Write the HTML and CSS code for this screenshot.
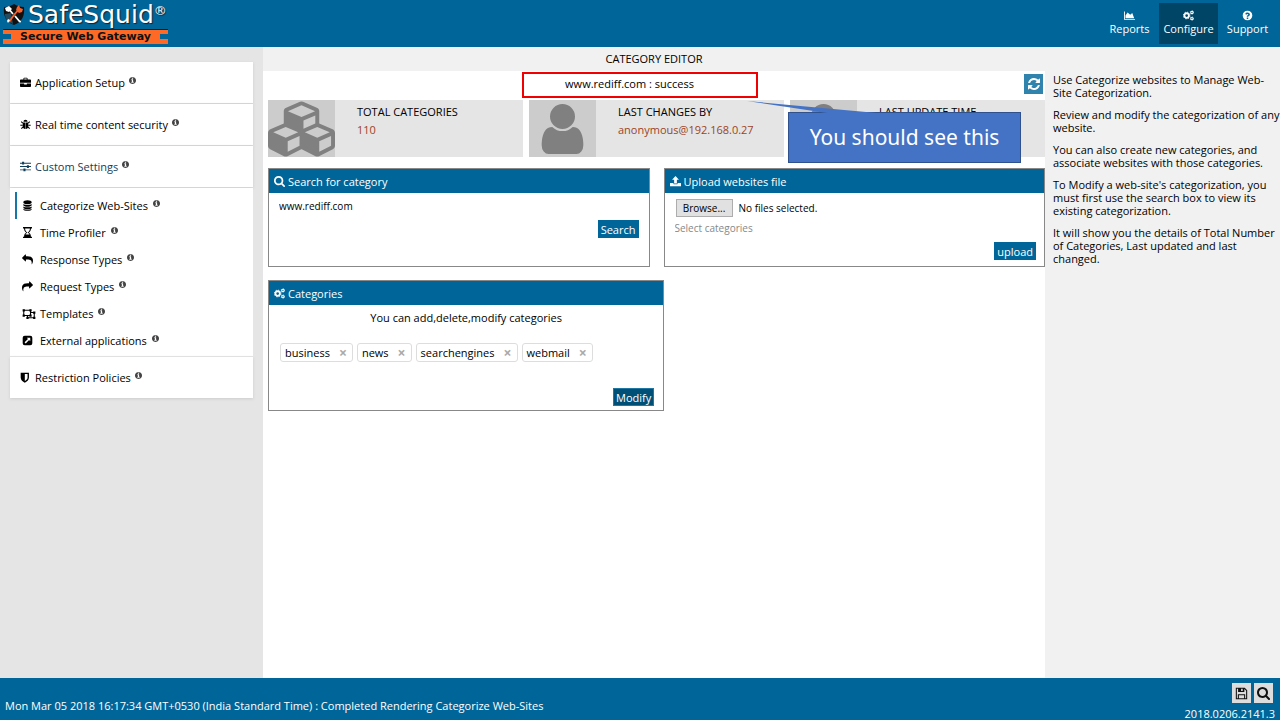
FILE: index.html
```html
<!DOCTYPE html>
<html lang="en">
<head>
<meta charset="utf-8">
<meta name="viewport" content="width=device-width, initial-scale=1">
<title>SafeSquid - Category Editor</title>
<link rel="stylesheet" href="styles.css">
</head>
<body>
<svg class="sprite" aria-hidden="true">
  <symbol id="info" viewBox="128 128 1536 1536"><path d="M1152 1376v-160q0-14-9-23t-23-9h-96v-512q0-14-9-23t-23-9h-320q-14 0-23 9t-9 23v160q0 14 9 23t23 9h96v320h-96q-14 0-23 9t-9 23v160q0 14 9 23t23 9h448q14 0 23-9t9-23zm-128-896v-160q0-14-9-23t-23-9h-192q-14 0-23 9t-9 23v160q0 14 9 23t23 9h192q14 0 23-9t9-23zm640 416q0 209-103 385.500t-279.500 279.500-385.500 103-385.500-103-279.500-279.500-103-385.500 103-385.500 279.500-279.500 385.500-103 385.500 103 279.500 279.500 103 385.500z"/></symbol>
  <symbol id="search" viewBox="64 128 1664 1664"><path d="M1216 832q0-185-131.500-316.500t-316.500-131.500-316.500 131.500-131.500 316.500 131.500 316.500 316.500 131.500 316.500-131.500 131.500-316.500zm512 832q0 52-38 90t-90 38q-54 0-90-38l-343-342q-179 124-399 124-143 0-273.500-55.500t-225-150-150-225-55.500-273.500 55.500-273.500 150-225 225-150 273.500-55.500 273.500 55.500 225 150 150 225 55.500 273.500q0 220-124 399l343 343q37 37 37 90z"/></symbol>
  <symbol id="refresh" viewBox="0 0 1792 1792"><path d="M1639 1056q0 5-1 7-64 268-268 434.500t-478 166.500q-146 0-282.500-55t-243.500-157l-129 129q-19 19-45 19t-45-19-19-45v-448q0-26 19-45t45-19h448q26 0 45 19t19 45-19 45l-137 137q71 66 161 102t187 36q134 0 250-65t186-179q11-17 53-117 8-23 30-23h192q13 0 22.500 9.500t9.500 22.500zm25-800v448q0 26-19 45t-45 19h-448q-26 0-45-19t-19-45 19-45l138-138q-148-137-349-137-134 0-250 65t-186 179q-11 17-53 117-8 23-30 23h-199q-13 0-22.500-9.500t-9.500-22.500v-7q65-268 270-434.500t480-166.500q146 0 284 55.500t245 156.500l130-129q19-19 45-19t45 19 19 45z"/></symbol>
  <symbol id="cubes" viewBox="0 0 2176 1792"><path d="M640 1632l384-192v-314l-384 164v342zm-64-454l404-173-404-173-404 173zm1088 454l384-192v-314l-384 164v342zm-64-454l404-173-404-173-404 173zm-448-293l384-165v-266l-384 164v267zm-64-379l441-189-441-189-441 189zm1088 518v416q0 36-19 67t-52 47l-448 224q-25 14-57 14t-57-14l-448-224q-4-2-7-4-2 2-7 4l-448 224q-25 14-57 14t-57-14l-448-224q-33-16-52-47t-19-67v-416q0-38 21.500-70t56.500-48l434-186v-400q0-38 21.500-70t56.500-48l448-192q23-10 50-10t50 10l448 192q35 16 56.500 48t21.500 70v400l434 186q36 16 57 48t21 70z"/></symbol>
  <symbol id="user" viewBox="256 128 1280 1536"><path d="M1536 1399q0 109-62.500 187t-150.500 78h-854q-88 0-150.500-78t-62.500-187q0-85 8.500-160.500t31.500-152 58.500-131 94-89 134.500-34.500q131 128 313 128t313-128q76 0 134.500 34.500t94 89 58.500 131 31.500 152 8.500 160.500zm-256-887q0 159-112.500 271.500t-271.500 112.500-271.500-112.500-112.500-271.500 112.500-271.500 271.500-112.500 271.500 112.500 112.500 271.500z"/></symbol>
  <symbol id="gears" viewBox="0 0 16 16"><g fill="none" stroke="currentColor"><circle cx="5.300" cy="8" r="3.300" stroke-width="2.600"/><circle cx="5.300" cy="8" r="4.900" stroke-width="1.300" stroke-dasharray="2 1.848"/><circle cx="13" cy="3.500" r="1.700" stroke-width="1.600"/><circle cx="13" cy="3.500" r="2.600" stroke-width=".9" stroke-dasharray="1.300 1.422"/><circle cx="13" cy="12.500" r="1.700" stroke-width="1.600"/><circle cx="13" cy="12.500" r="2.600" stroke-width=".9" stroke-dasharray="1.300 1.422"/></g></symbol>
  <symbol id="chart" viewBox="0 0 16 16"><path d="M0 2h1.300v11H16v1.300H0zM2.200 12V8l3-4.500L9 7l3-2.500 2.800 7.500z"/></symbol>
  <symbol id="help" viewBox="0 0 16 16"><path fill-rule="evenodd" d="M8 1a7 7 0 1 1 0 14A7 7 0 0 1 8 1zM4.700 5.700l1.500 1.100C6.700 6 7.200 5.700 7.800 5.700c.8 0 1.300.4 1.300.9 0 .6-.4.800-1 1.200C7.200 8.300 6.900 9 6.900 9.900h2.200c0-.6.400-.8 1-1.200.8-.5 1.400-1.200 1.400-2.200 0-1.700-1.700-2.800-3.500-2.800-1.400 0-2.500.6-3.300 2zM6.900 11v2.100h2.200V11z"/></symbol>
  <symbol id="briefcase" viewBox="0 0 16 16"><path fill-rule="evenodd" d="M5 3.500V2.200C5 1.500 5.500 1 6.200 1h3.600c.7 0 1.200.5 1.200 1.200v1.300h3.500c.8 0 1.500.6 1.500 1.500v3.500H0V5c0-.9.700-1.500 1.500-1.500zm1.200 0h3.600V2.200H6.200zM0 9.300h6V11h4V9.300h6v3.800c0 .8-.7 1.400-1.500 1.400h-13c-.8 0-1.500-.6-1.500-1.400z"/></symbol>
  <symbol id="bug" viewBox="0 0 16 16"><path d="M5 4a3 3 0 0 1 6 0zM4 5h3.700v9.500C5.300 14.300 4 12.500 4 10zM8.300 5H12v5c0 2.500-1.300 4.300-3.700 4.500z"/><path d="M4 6 1.800 3.800M12 6l2.200-2.200M4 9H.5M12 9h3.500M4.500 11.500 2 14M11.500 11.500 14 14" stroke="currentColor" stroke-width="1.600"/></symbol>
  <symbol id="sliders" viewBox="0 0 16 16"><path d="M0 2.600h16v1.300H0zM0 7.400h16v1.300H0zM0 12.200h16v1.300H0z"/><path d="M3 1.200h3v4H3zM10 6h3v4h-3zM5 10.800h3v4H5z"/></symbol>
  <symbol id="database" viewBox="1 0 14 16"><path d="M2 3c0-1.400 2.700-2.500 6-2.500S14 1.600 14 3v1c0 1.300-2.700 2.200-6 2.200S2 5.300 2 4zM2 5.700C4.500 7.600 11.500 7.600 14 5.700v1.900c0 1.300-2.700 2.200-6 2.200S2 8.900 2 7.600zM2 9.300c2.500 1.900 9.500 1.900 12 0v1.900c0 1.300-2.700 2.200-6 2.200s-6-.9-6-2.200zM2 12.800c2.500 1.900 9.500 1.900 12 0v.6c0 1.400-2.700 2.300-6 2.300s-6-.9-6-2.300z"/></symbol>
  <symbol id="hourglass" viewBox="0 0 16 16"><path fill-rule="evenodd" d="M1.500 0h13v2H13c0 3-1.300 4.900-3.300 6 2 1.100 3.300 3 3.300 6h1.500v2h-13v-2H3c0-3 1.300-4.900 3.300-6C4.300 6.900 3 5 3 2H1.500zm3 2c0 2.700 1.200 4.500 3 5.500v1c-1.200.6-2 1.400-2.500 2.500h6c-.5-1.100-1.300-1.900-2.500-2.500v-1c1.800-1 3-2.800 3-5.500z"/></symbol>
  <symbol id="share" viewBox="0 0 1792 1792"><path d="M1792 640q0 26-19 45l-512 512q-19 19-45 19t-45-19-19-45v-256h-224q-98 0-175.500 6t-154 21.500-133 42.500-105.500 69.500-80 101-48.500 138.500-17.500 181q0 55 5 123 0 6 2.500 23.500t2.500 26.500q0 15-8.500 25t-23.500 10q-16 0-28-17-7-9-13-22t-13.500-30-10.500-24q-127-285-127-451 0-199 53-333 162-403 875-403h224v-256q0-26 19-45t45-19 45 19l512 512q19 19 19 45z"/></symbol>
  <symbol id="group" viewBox="0 0 18 16"><path fill="none" stroke="currentColor" stroke-width="1.400" d="M2 3h9v7H2zM11 6h5v7H7v-3"/><path d="M.5 1.500h3v3h-3zM9.500 1.500h3v3h-3zM.5 8.500h3v3h-3zM9.500 8.500h3v3h-3zM14.500 4.500h3v3h-3zM14.500 11.500h3v3h-3zM5.500 11.500h3v3h-3z"/></symbol>
  <symbol id="external" viewBox="0 0 16 16"><path fill-rule="evenodd" d="M4 1h8a3 3 0 0 1 3 3v8a3 3 0 0 1-3 3H4a3 3 0 0 1-3-3V4a3 3 0 0 1 3-3zm3 3 1.700 1.700L3.800 10.600l1.600 1.600 4.900-4.900L12 9V4z"/></symbol>
  <symbol id="shield" viewBox="1 0 16 16"><path fill-rule="evenodd" d="M2 1h12v7c0 4-3 6-6 7.500C5 14 2 12 2 8zm6 2v10.200c2.300-1.300 4-2.800 4-5.200V3z"/></symbol>
  <symbol id="upload" viewBox="0 0 16 16"><path d="M8 0l5 5.500h-3V11H6V5.500H3zM0 10h5v1.200c0 .6.400.9 1 .9h4c.6 0 1-.3 1-.9V10h5v5H0z"/></symbol>
  <symbol id="save" viewBox="0 0 16 16"><path fill-rule="evenodd" d="M1 1h11l3 3v11H1zm1.300 1.300v11.400h1.200V9h9v4.700h1.200V4.600l-2.200-2.200V6H3.800V2.300zM7.500 2.300V5h2V2.300zm-2.700 8v3.400h6.400v-3.400z"/></symbol>
  <symbol id="crest" viewBox="0 0 22 23"><path fill="#111" d="M1 4c4 0 7-1 10-3 3 2 6 3 10 3 1 9-2 15-10 18C3 19 0 13 1 4z"/><path fill="#3d86ab" d="M2 11l6-1 2 11C5 19 2 16 2 11z" opacity=".5"/><path stroke="#fff" stroke-width="1.800" d="m5 5 5 6m2 2 5 6"/><path fill="#fff" d="m2 5 4-2 3 3-3 3-3-1z"/><path stroke="#f4622d" stroke-width="1.800" d="m17 5-6 7-5 7"/><path fill="#f4622d" d="m14 4 2-2 1 3 3 1-1 3-3 1-3-3z"/><path fill="#fff" d="m5 16 2 1-2 3-1-2zM16 17l2 1v2z"/></symbol>
</svg>

<header class="topbar">
  <div class="brand">
    <div class="brand-name"><svg class="crest"><use href="#crest"/></svg><span>SafeSquid<sup>®</sup></span></div>
    <div class="tagline"><span>Secure Web Gateway</span></div>
  </div>
  <nav class="topnav" aria-label="Primary">
    <a href="#reports"><svg class="icon"><use href="#chart"/></svg>Reports</a>
    <a href="#configure" class="active"><svg class="icon"><use href="#gears"/></svg>Configure</a>
    <a href="#support"><svg class="icon"><use href="#help"/></svg>Support</a>
  </nav>
</header>

<div class="workspace">
  <nav class="sidebar" aria-label="Configuration">
    <a class="section" href="#setup"><svg class="icon"><use href="#briefcase"/></svg>Application Setup<svg class="tip"><use href="#info"/></svg></a>
    <a class="section" href="#security"><svg class="icon"><use href="#bug"/></svg>Real time content security<svg class="tip"><use href="#info"/></svg></a>
    <a class="section open" href="#custom"><svg class="icon"><use href="#sliders"/></svg>Custom Settings<svg class="tip"><use href="#info"/></svg></a>
    <div class="submenu">
      <a class="current" href="#categorize"><svg class="icon"><use href="#database"/></svg>Categorize Web-Sites<svg class="tip"><use href="#info"/></svg></a>
      <a href="#time"><svg class="icon"><use href="#hourglass"/></svg>Time Profiler<svg class="tip"><use href="#info"/></svg></a>
      <a href="#response"><svg class="icon flip"><use href="#share"/></svg>Response Types<svg class="tip"><use href="#info"/></svg></a>
      <a href="#request"><svg class="icon"><use href="#share"/></svg>Request Types<svg class="tip"><use href="#info"/></svg></a>
      <a href="#templates"><svg class="icon wide"><use href="#group"/></svg>Templates<svg class="tip"><use href="#info"/></svg></a>
      <a href="#external-apps"><svg class="icon"><use href="#external"/></svg>External applications<svg class="tip"><use href="#info"/></svg></a>
    </div>
    <a class="section" href="#restriction"><svg class="icon"><use href="#shield"/></svg>Restriction Policies<svg class="tip"><use href="#info"/></svg></a>
  </nav>

  <main class="main">
    <h1 class="title">CATEGORY EDITOR</h1>
    <div class="status">
      <p>www.rediff.com : success</p>
      <button class="refresh" type="button" aria-label="Refresh"><svg><use href="#refresh"/></svg></button>
      <div class="highlight"></div>
    </div>
    <div class="content">
      <section class="stats">
        <div class="stat"><div class="tile"><svg class="cubes"><use href="#cubes"/></svg></div><div class="fact"><h2>TOTAL CATEGORIES</h2><p>110</p></div></div>
        <div class="stat"><div class="tile"><svg class="person"><use href="#user"/></svg></div><div class="fact"><h2>LAST CHANGES BY</h2><p>anonymous@192.168.0.27</p></div></div>
        <div class="stat"><div class="tile"><svg class="person"><use href="#user"/></svg></div><div class="fact"><h2>LAST UPDATE TIME</h2></div></div>
        <div class="callout">
          <svg class="pointer" viewBox="0 0 130 16"><path d="M0 1 80 13h50z"/></svg>
          <p>You should see this</p>
        </div>
      </section>
      <div class="panels">
        <section class="panel">
          <h2><svg class="icon"><use href="#search"/></svg>Search for category</h2>
          <form class="panel-body">
            <input class="field" type="text" aria-label="Website" value="www.rediff.com">
            <div class="actions"><button type="button">Search</button></div>
          </form>
        </section>
        <section class="panel">
          <h2><svg class="icon"><use href="#upload"/></svg>Upload websites file</h2>
          <form class="panel-body upload">
            <label class="file"><input type="file"><span class="browse">Browse...</span><span>No files selected.</span></label>
            <input class="field" type="text" aria-label="Select categories" placeholder="Select categories">
            <div class="actions"><button type="button">upload</button></div>
          </form>
        </section>
      </div>
      <section class="panel categories">
        <h2><svg class="icon"><use href="#gears"/></svg>Categories</h2>
        <div class="panel-body">
          <p class="hint">You can add,delete,modify categories</p>
          <ul class="chips">
            <li>business<button type="button" aria-label="Remove business">×</button></li>
            <li>news<button type="button" aria-label="Remove news">×</button></li>
            <li>searchengines<button type="button" aria-label="Remove searchengines">×</button></li>
            <li>webmail<button type="button" aria-label="Remove webmail">×</button></li>
          </ul>
          <div class="actions"><button class="pressed" type="button">Modify</button></div>
        </div>
      </section>
    </div>
  </main>

  <aside class="help">
    <p>Use Categorize websites to Manage Web-Site Categorization.</p>
    <p>Review and modify the categorization of any website.</p>
    <p>You can also create new categories, and associate websites with those categories.</p>
    <p>To Modify a web-site's categorization, you must first use the search box to view its existing categorization.</p>
    <p>It will show you the details of Total Number of Categories, Last updated and last changed.</p>
  </aside>
</div>

<footer class="footer">
  <p>Mon Mar 05 2018 16:17:34 GMT+0530 (India Standard Time) : Completed Rendering Categorize Web-Sites</p>
  <div class="tools">
    <div class="tool-buttons">
      <button type="button" aria-label="Save"><svg><use href="#save"/></svg></button>
      <button type="button" aria-label="Search"><svg><use href="#search"/></svg></button>
    </div>
    <span>2018.0206.2141.3</span>
  </div>
</footer>
</body>
</html>
```

FILE: styles.css
```css
:root {
  --blue: #006699;
  --grey: #e5e5e5;
  --pale: #f1f1f1;
}
* { box-sizing: border-box; }
body {
  margin: 0;
  min-height: 100vh;
  display: flex;
  flex-direction: column;
  font: 11px/13px "Open Sans", "Noto Sans", sans-serif;
  color: #000;
  background: #fff;
}
h1, h2, p, ul { margin: 0; padding: 0; font-size: 11px; font-weight: 400; }
a { color: inherit; text-decoration: none; }
button, input { font: inherit; color: inherit; border: 0; padding: 0; background: none; }
svg { fill: currentColor; flex: none; }
.sprite { position: absolute; width: 0; height: 0; }
.icon { width: 11px; height: 11px; }

.topbar {
  display: flex;
  justify-content: space-between;
  height: 47px;
  background: var(--blue);
  color: #fff;
}
.brand { width: 168px; padding-left: 3px; }
.brand-name {
  display: flex;
  align-items: center;
  gap: 3px;
  height: 29px;
  font: 25px/29px "DejaVu Sans", sans-serif;
  text-shadow: 1px 1px 1px #123;
  white-space: nowrap;
}
.brand-name sup { font-size: 13px; line-height: 0; vertical-align: 8px; }
.crest { width: 22px; height: 23px; }
.tagline {
  height: 15px;
  padding: 0 8px;
  border-top: 1px solid #222;
  background: linear-gradient(#ff6926 4px, var(--blue) 4px, var(--blue) 9px, #ff6926 9px);
  font: bold 11px/13px "DejaVu Sans", sans-serif;
  color: #111;
  text-align: center;
}
.tagline span { display: block; height: 14px; background: #ff6926; white-space: nowrap; }
.topnav { display: flex; padding: 3px 3px 3px 0; }
.topnav a {
  display: flex;
  flex-direction: column;
  align-items: center;
  gap: 1px;
  width: 59px;
  padding-top: 7px;
}
.topnav .active { background: #004466; }

.workspace {
  flex: 1;
  display: grid;
  grid-template-columns: 263px minmax(0, 1fr) 235px;
}
.sidebar { background: var(--grey); padding: 15px 10px; }
.section {
  display: flex;
  align-items: center;
  gap: 4px;
  height: 41px;
  margin-bottom: 1px;
  padding: 0 10px;
  background: #fff;
  box-shadow: 0 1px 3px #ccc;
}
.open { color: #123e57; }
.tip { width: 7px; height: 7px; margin-bottom: 5px; color: #444; }
.submenu { background: #fff; padding: 4px 5px 2px; margin-bottom: 1px; }
.submenu a {
  display: flex;
  align-items: center;
  gap: 5px;
  height: 27px;
  padding-left: 7px;
}
.submenu .icon { margin-right: 2px; }
.submenu .wide { width: 14px; height: 12px; margin-right: -1px; }
.submenu .current { border-left: 2px solid #1576a7; padding-left: 5px; }
.flip { transform: scaleX(-1); }

.title { height: 24px; line-height: 24px; background: var(--pale); text-align: center; }
.status {
  position: relative;
  display: flex;
  align-items: center;
  height: 29px;
  padding: 0 2px 4px 0;
}
.status p { flex: 1; text-align: center; padding-right: 28px; }
.refresh { width: 19px; height: 20px; background: #2f83ad; color: #fff; }
.refresh svg { display: block; width: 14px; height: 14px; margin: auto; }
.highlight {
  position: absolute;
  left: 259px;
  top: 1px;
  width: 236px;
  height: 26px;
  border: 2px solid #f00000;
}
.content { padding-left: 5px; }
.stats { position: relative; display: grid; grid-template-columns: repeat(3, 1fr); gap: 6px; }
.stat { display: flex; height: 57px; background: var(--grey); }
.tile { display: flex; width: 67px; align-items: center; justify-content: center; background: #ccc; color: #808080; }
.cubes { width: 67px; height: 58px; }
.person { width: 43px; height: 50px; }
.fact { padding: 5px 0 0 22px; }
.fact p { margin-top: 5px; color: #9c4325; }
.callout {
  position: absolute;
  left: 520px;
  top: 12px;
  width: 233px;
  height: 51px;
  border: 1px solid #2f528f;
  background: #4472c4;
  color: #fff;
  text-align: center;
}
.callout p { font: 21px/49px "Noto Sans", sans-serif; }
.pointer { position: absolute; left: -42px; top: -13px; width: 130px; height: 16px; fill: #4472c4; }
.panels { display: grid; grid-template-columns: 1fr 1fr; gap: 14px; margin: 11px 0 13px; }
.panel { border: 1px solid #888; }
.panel h2 {
  display: flex;
  align-items: center;
  gap: 3px;
  height: 24px;
  padding: 0 5px;
  background: var(--blue);
  color: #fff;
}
.panel-body { display: flex; flex-direction: column; min-height: 73px; padding: 6px 10px; }
.field { width: 100%; font-size: 10px; line-height: 14px; }
.field::placeholder { color: #888; opacity: 1; }
.actions { display: flex; justify-content: flex-end; padding-top: 7px; }
.actions button { height: 18px; padding: 0 3px; background: var(--blue); color: #fff; }
.actions .pressed { background: #004f77; border: 1px solid #1f78a4; padding: 0 2px; }
.upload { padding: 6px 8px 3px 10px; }
.file { display: flex; align-items: center; gap: 6px; font-size: 10px; margin-bottom: 4px; }
.file input { position: absolute; width: 1px; height: 1px; opacity: 0; }
.browse { width: 57px; height: 18px; margin-left: 1px; border: 1px solid #adadad; background: #e1e1e1; text-align: center; line-height: 16px; }
.categories { width: 51%; }
.categories .panel-body { min-height: 105px; justify-content: space-between; padding: 6px 9px 4px; }
.hint { text-align: center; }
.chips { display: flex; gap: 4px; padding-left: 2px; list-style: none; }
.chips li { display: flex; align-items: center; gap: 8px; height: 19px; padding: 0 4px; border: 1px solid #ddd; border-radius: 3px; }
.chips button { width: 10px; color: #aaa; font-weight: 700; font-size: 14px; line-height: 12px; }

.help { background: var(--pale); padding: 26px 0 0 8px; }
.help p { margin-bottom: 9px; }

.footer {
  display: flex;
  justify-content: space-between;
  align-items: flex-end;
  height: 42px;
  padding: 0 5px;
  background: var(--blue);
  color: #fff;
}
.footer > p { padding-bottom: 8px; }
.tools { display: flex; flex-direction: column; align-items: flex-end; gap: 4px; }
.tool-buttons { display: flex; gap: 3px; padding-right: 2px; }
.tool-buttons button { width: 19px; height: 20px; background: #ddd; color: #111; }
.tool-buttons svg { display: block; width: 13px; height: 13px; margin: auto; }
```
